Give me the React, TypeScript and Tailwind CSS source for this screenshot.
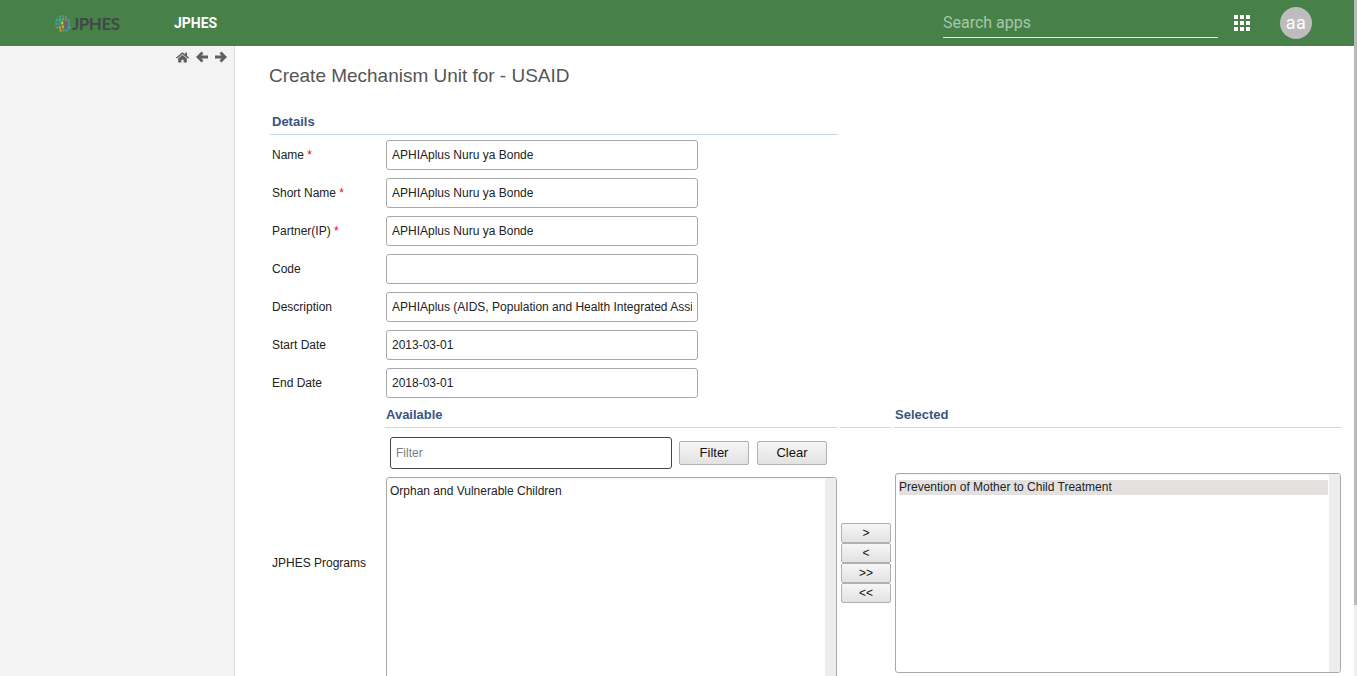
import { FaHome } from 'react-icons/fa';

const fields = [
  { label: 'Name', value: 'APHIAplus Nuru ya Bonde', required: true },
  { label: 'Short Name', value: 'APHIAplus Nuru ya Bonde', required: true },
  { label: 'Partner(IP)', value: 'APHIAplus Nuru ya Bonde', required: true },
  { label: 'Code', value: '' },
  { label: 'Description', value: 'APHIAplus (AIDS, Population and Health Integrated Assistance)' },
  { label: 'Start Date', value: '2013-03-01' },
  { label: 'End Date', value: '2018-03-01' },
];

const moveButtons = ['>', '<', '>>', '<<'];

const dots = [
  { x: 6, y: 2, c: '#4f9a86' }, { x: 10, y: 1, c: '#5f8f78' }, { x: 14, y: 2, c: '#6f8a72' },
  { x: 2, y: 6, c: '#3f9f94' }, { x: 6, y: 6, c: '#2fb0b8' }, { x: 10, y: 5, c: '#64a860' }, { x: 14, y: 6, c: '#6f8a72' }, { x: 18, y: 6, c: '#5f8f78' },
  { x: 1, y: 11, c: '#4f9a86' }, { x: 5, y: 11, c: '#2aa7a0' }, { x: 9, y: 10, c: '#c3c83a' }, { x: 13, y: 10, c: '#b13a8c' }, { x: 18, y: 11, c: '#2f9fa8' },
  { x: 2, y: 16, c: '#5f8f78' }, { x: 6, y: 16, c: '#d98a2c' }, { x: 10, y: 15, c: '#c9a83d' }, { x: 14, y: 15, c: '#c2318c' }, { x: 18, y: 16, c: '#3aa8b8' },
  { x: 7, y: 20, c: '#d98a2c' }, { x: 11, y: 20, c: '#4f9a86' }, { x: 15, y: 20, c: '#3a9a9a' },
];

function Logo() {
  return (
    <div className="flex items-center w-[66px] ml-[54px]">
      <svg width="17" height="18" viewBox="0 0 22 24" className="shrink-0">
        {dots.map((d, i) => (
          <rect key={i} x={d.x} y={d.y} width="3" height="4" rx="1" fill={d.c} />
        ))}
      </svg>
      <span className="ml-px text-[17px] leading-none font-['Lato',sans-serif] font-bold text-[#3f4a45] tracking-[-0.5px]">JPHES</span>
    </div>
  );
}

function AppsIcon() {
  return (
    <svg width="16" height="16" viewBox="0 0 16 16" fill="white">
      {[0, 6, 12].map((y) =>
        [0, 6, 12].map((x) => <rect key={`${x}-${y}`} x={x} y={y} width="4" height="4" />)
      )}
    </svg>
  );
}

function Arrow({ flip }: { flip?: boolean }) {
  return (
    <svg width="12" height="12" viewBox="0 0 12 12" fill="none" stroke="currentColor" strokeWidth="2.8" className={flip ? 'rotate-180' : ''}>
      <path d="M6.5 1.5 2 6l4.5 4.5M2.5 6H12" />
    </svg>
  );
}

function ListBox({ children, className }: { children?: React.ReactNode; className: string }) {
  return (
    <div className={`relative border border-[#a9a9a9] rounded-[3px] bg-white overflow-hidden shadow-[inset_0_1px_1px_rgba(0,0,0,0.05)] ${className}`}>
      {children}
      <div className="absolute top-0 right-0 bottom-0 w-[11px] bg-[#ededed]" />
    </div>
  );
}

export default function App() {
  return (
    <div className="relative h-screen overflow-hidden flex flex-col bg-white font-['Liberation_Sans',sans-serif] text-xs text-[#222]">
      {/* Header */}
      <header className="h-[46px] shrink-0 bg-[#48804a] flex items-center">
        <Logo />
        <span className="ml-[54px] text-sm font-bold font-['Roboto',sans-serif] text-white">JPHES</span>
        <div className="ml-auto mr-[45px] flex items-center">
          <div className="w-[275px] h-[30px] border-b border-[#e3ece3] flex items-center text-base font-['Roboto',sans-serif] text-[#a6c7a8]">
            Search apps
          </div>
          <div className="ml-4 w-4"><AppsIcon /></div>
          <div className="ml-[30px] w-8 h-8 rounded-full bg-[#bdbdbd] flex items-center justify-center text-lg tracking-[0.5px] font-['Roboto',sans-serif] text-white">
            aa
          </div>
        </div>
      </header>

      <div className="flex flex-1 min-h-0">
        {/* Sidebar */}
        <aside className="w-[235px] shrink-0 bg-[#f3f3f3] border-r border-[#dfdfdf] flex justify-end gap-[7px] pr-[7px] pt-[5px] text-[#5f5f5f]">
          <FaHome className="w-[13px] h-[13px]" />
          <Arrow />
          <Arrow flip />
        </aside>

        {/* Main */}
        <main className="flex-1 min-w-0 pl-[34px] pt-[18px]">
          <h1 className="text-[18.98px] leading-6 text-[#555]">Create Mechanism Unit for - USAID</h1>

          <div className="mt-6 ml-px w-[568px] h-[23px] border-b border-[#c9d6e2] pl-0.5 text-[13px] font-bold text-[#3a5483] leading-[20px]">
            Details
          </div>

          <div className="mt-[5px] ml-[3px] flex flex-col gap-2">
            {fields.map((f) => (
              <div key={f.label} className="flex items-center h-[30px]">
                <label className="w-[114px] shrink-0">
                  {f.label}
                  {f.required && <span className="text-[#f00]"> *</span>}
                </label>
                <input
                  readOnly
                  value={f.value}
                  className="w-[312px] h-[30px] px-[5px] border border-[#a9a9a9] rounded-[3px] bg-white text-xs text-[#222] outline-none"
                />
              </div>
            ))}
          </div>

          {/* Program picker */}
          <div className="ml-[3px] flex">
            <div className="w-[113px] shrink-0 pt-[158px]">
              <span className="relative top-[-1px] left-0">JPHES Programs</span>
            </div>

            <div className="w-[453px] shrink-0">
              <div className="h-[22px] mt-2 border-b border-[#d3d8dc] pl-px text-[13px] font-bold text-[#3a5483] leading-[18px]">
                Available
              </div>
              <div className="mt-[9px] ml-[5px] flex items-center">
                <input
                  readOnly
                  placeholder="Filter"
                  className="w-[282px] h-8 px-[5px] border border-[#444] rounded-[3px] text-xs outline-none placeholder:text-[#808080]"
                />
                <button className="ml-[7px] w-[70px] h-6 text-[13px] text-[#111] border border-[#b0b0b0] rounded-[2px] bg-gradient-to-b from-[#f6f6f6] to-[#e2e2e2]">Filter</button>
                <button className="ml-2 w-[70px] h-6 text-[13px] text-[#111] border border-[#b0b0b0] rounded-[2px] bg-gradient-to-b from-[#f6f6f6] to-[#e2e2e2]">Clear</button>
              </div>
              <ListBox className="mt-2 ml-px w-[451px] h-[240px] pl-[3px] pt-[5px]">Orphan and Vulnerable Children</ListBox>
            </div>

            <div className="w-[51px] ml-[2px] shrink-0">
              <div className="h-[22px] mt-2 border-b border-[#d3d8dc]" />
              <div className="mt-[95px] ml-px flex flex-col">
                {moveButtons.map((b) => (
                  <button key={b} className="w-[50px] h-5 text-xs leading-none text-[#111] border border-[#b0b0b0] rounded-[2px] bg-gradient-to-b from-[#f6f6f6] to-[#e2e2e2]">{b}</button>
                ))}
              </div>
            </div>

            <div className="w-[448px] ml-[3px] shrink-0">
              <div className="h-[22px] mt-2 border-b border-[#d3d8dc] pl-px text-[13px] font-bold text-[#3a5483] leading-[18px]">
                Selected
              </div>
              <ListBox className="mt-[45px] ml-px w-[446px] h-[200px] pl-[3px] pt-1.5">
                <div className="w-[429px] h-[15px] leading-[15px] bg-[#e3e1df]">Prevention of Mother to Child Treatment</div>
              </ListBox>
            </div>
          </div>
        </main>
      </div>

      {/* Page scrollbar */}
      <div className="absolute top-0 right-0 bottom-0 w-[3px] bg-[#efefef]">
        <div className="h-[605px] bg-[#b9b9b9]" />
      </div>
    </div>
  );
}
